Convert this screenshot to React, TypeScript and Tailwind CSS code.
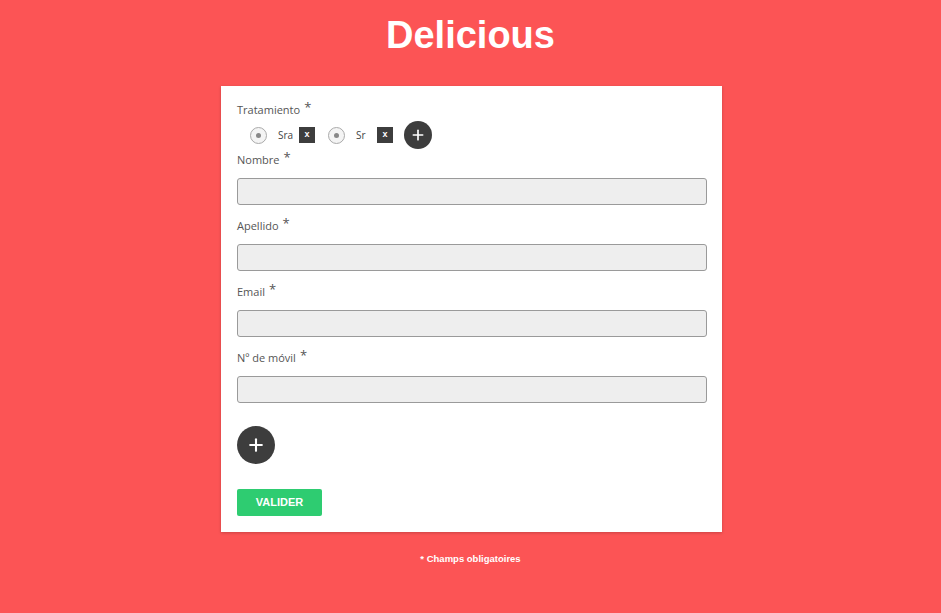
import { Plus } from "lucide-react";

const Label = ({ text }: { text: string }) => (
  <label className="flex items-start text-[11px] leading-[16px] text-[#555]" style={{ fontFamily: '"Open Sans", sans-serif' }}>
    {text}
    <span className="ml-[4px] text-[13px] leading-[10px]">*</span>
  </label>
);

const Field = ({ text }: { text: string }) => (
  <div className="flex flex-col">
    <Label text={text} />
    <div className="mt-[10px] h-[27px] w-full rounded-[3px] border border-[#9a9a9a] bg-[#eeeeee]" />
  </div>
);

const Radio = ({ label }: { label: string }) => (
  <div className="flex items-center">
    <div className="flex h-[17px] w-[17px] shrink-0 items-center justify-center rounded-full border border-[#aaa] bg-[#f4f4f4]">
      <div className="h-[5px] w-[5px] rounded-full bg-[#888]" />
    </div>
    <span className="ml-[11px] w-[21px] text-[10px] text-[#444]" style={{ fontFamily: '"Open Sans", sans-serif' }}>
      {label}
    </span>
    <div className="flex h-[16px] w-[16px] shrink-0 items-center justify-center bg-[#3d3d3d] text-[9px] font-bold text-white" style={{ fontFamily: '"Liberation Sans", sans-serif' }}>
      x
    </div>
  </div>
);

export default function App() {
  return (
    <div className="min-h-[613px] w-full bg-[#fc5455] pt-[13px]" style={{ fontFamily: '"Liberation Sans", Arial, sans-serif' }}>
      <h1 className="text-center text-[38px] font-bold leading-[44px] text-white">Delicious</h1>
      <div className="mx-auto mt-[29px] w-[501px] translate-x-[1px] bg-white pb-[16px] pl-[16px] pr-[15px] pt-[16px] shadow-[0_1px_3px_rgba(0,0,0,0.2)]">
        <Label text="Tratamiento" />
        <div className="mt-[3px] flex items-center pl-[13px]">
          <Radio label="Sra" />
          <div className="ml-[13px]">
            <Radio label="Sr" />
          </div>
          <button className="ml-[11px] flex h-[28px] w-[28px] items-center justify-center rounded-full bg-[#3d3d3d] text-white">
            <Plus size={16} strokeWidth={2.5} />
          </button>
        </div>
        <div className="mt-[3px] flex flex-col gap-[13px]">
          <Field text="Nombre" />
          <Field text="Apellido" />
          <Field text="Email" />
          <Field text="Nº de móvil" />
        </div>
        <button className="mt-[23px] flex h-[38px] w-[38px] items-center justify-center rounded-full bg-[#3d3d3d] text-white">
          <Plus size={20} strokeWidth={2.5} />
        </button>
        <button className="mt-[25px] flex h-[27px] w-[85px] items-center justify-center rounded-[2px] bg-[#2ecc71] text-[11px] font-bold text-white">
          VALIDER
        </button>
      </div>
      <p className="mt-[20px] text-center text-[9.5px] font-bold text-white">* Champs obligatoires</p>
    </div>
  );
}
